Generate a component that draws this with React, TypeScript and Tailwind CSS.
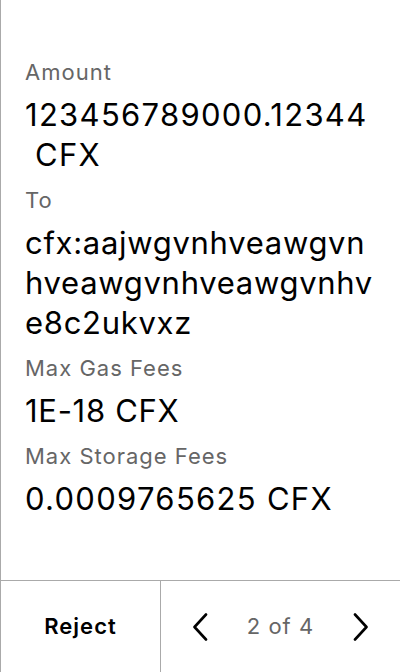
const rows = [
  {
    label: "Amount",
    lines: ["123456789000.12344", " CFX"],
    wide: true,
  },
  {
    label: "To",
    lines: ["cfx:aajwgvnhveawgvn", "hveawgvnhveawgvnhv", "e8c2ukvxz"],
  },
  { label: "Max Gas Fees", lines: ["1E-18 CFX"] },
  { label: "Max Storage Fees", lines: ["0.0009765625 CFX"], wide: true },
];

function Chevron({ dir }: { dir: "left" | "right" }) {
  return (
    <svg width="16" height="28" viewBox="0 0 16 28" fill="none">
      <path
        d={dir === "left" ? "M14 1.5 L2.5 14 L14 26.5" : "M2 1.5 L13.5 14 L2 26.5"}
        stroke="#000"
        strokeWidth="2.6"
        strokeLinecap="round"
        strokeLinejoin="round"
      />
    </svg>
  );
}

export default function App() {
  return (
    <div className="flex h-[672px] w-[400px] flex-col border-l border-[#aaaaaa] bg-white font-['Inter',sans-serif] text-black">
      <div className="flex-1 pl-6 pt-[57px]">
        {rows.map((r) => (
          <div key={r.label} className="mb-[10px]">
            <div className="text-[22px] leading-[30px] tracking-[1px] text-[#666666]">
              {r.label}
            </div>
            <div
              className={
                "mt-[8px] text-[31px] leading-[40px] " +
                (r.wide ? "tracking-[1.3px]" : "tracking-[0.7px]")
              }
            >
              {r.lines.map((l) => (
                <div key={l} className="whitespace-pre">
                  {l}
                </div>
              ))}
            </div>
          </div>
        ))}
      </div>
      <div className="flex h-[92px] border-t border-[#aaaaaa]">
        <button className="flex w-[160px] items-center justify-center border-r border-[#aaaaaa] text-[22px] font-semibold tracking-[1px]">
          Reject
        </button>
        <div className="flex flex-1 items-center justify-between px-[31px]">
          <Chevron dir="left" />
          <span className="text-[22px] tracking-[1px] text-[#666666]">2 of 4</span>
          <Chevron dir="right" />
        </div>
      </div>
    </div>
  );
}
